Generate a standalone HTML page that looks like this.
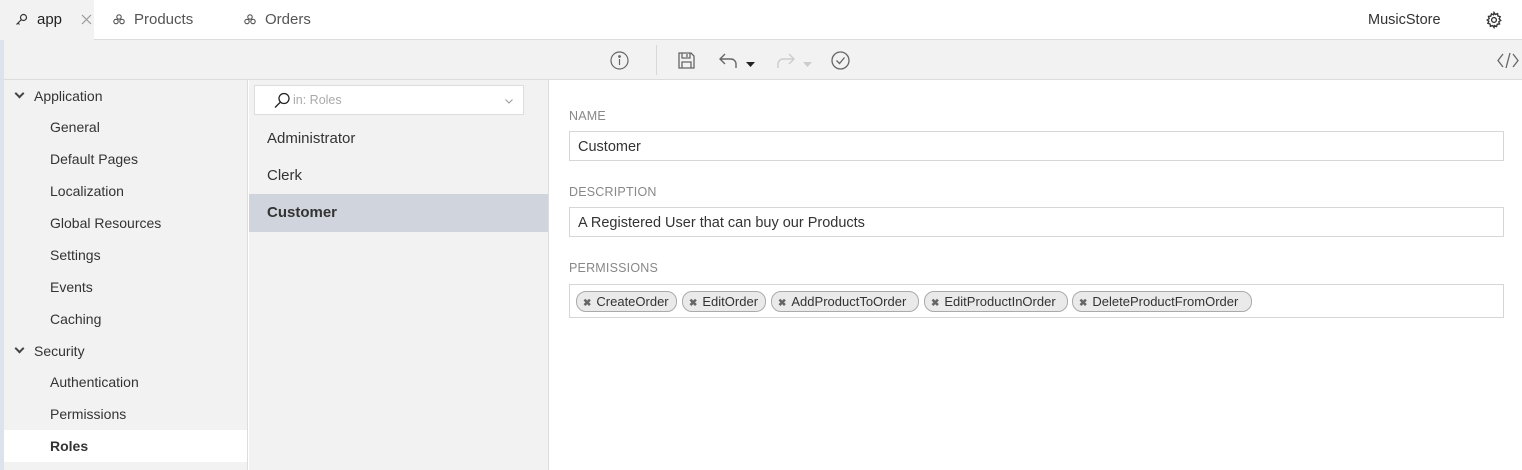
<!DOCTYPE html>
<html><head><meta charset="utf-8"><style>
*{box-sizing:border-box;margin:0;padding:0}
body{width:1522px;height:470px;overflow:hidden;font-family:"Liberation Sans",sans-serif;font-size:14px;color:#333;background:#fff;position:relative}
.abs{position:absolute}
.top{left:0;top:0;width:1522px;height:40px;background:#fff;border-bottom:1px solid #dcdcdc}
.tb{left:0;top:40px;width:1522px;height:40px;background:#f2f2f2;border-bottom:1px solid #dcdcdc}
.strip{left:0;top:40px;width:4px;height:430px;background:#dde3ec}
.side{left:4px;top:80px;width:244px;height:390px;background:#f2f2f2;border-right:1px solid #dcdcdc}
.mid{left:249px;top:80px;width:300px;height:390px;background:#f2f2f2;border-right:1px solid #dcdcdc}
.it{position:absolute;left:46px;font-size:14px;color:#333}
.hd{position:absolute;left:30px;font-size:14px;color:#333}
.chev{position:absolute;left:12px;width:7px;height:7px;border-right:2px solid #444;border-bottom:2px solid #444;transform:rotate(45deg)}
.lbl{position:absolute;left:569px;font-size:12.5px;color:#888;letter-spacing:.2px}
.inp{position:absolute;left:569px;width:935px;height:30px;border:1px solid #d6d6d6;background:#fff;padding:7px 8px;font-size:14.5px;color:#333}
.chip{position:absolute;top:6px;height:21px;border:1px solid #aaa;border-radius:10px;background:#eaeaea;padding:0 0 0 6px;font-size:13px;color:#333;line-height:19px;white-space:nowrap}
.chip b{font-size:10px;color:#666;margin-right:5px}
svg{position:absolute}
</style></head><body>
<div class="abs top"></div>
<div class="abs" style="left:4px;top:0;width:90px;height:40px;background:#f2f2f2"></div>
<div class="abs" style="left:0;top:0;width:4px;height:40px;background:#f2f2f2"></div>
<svg style="left:15px;top:13px" width="13" height="13" viewBox="0 0 13 13" fill="none" stroke="#333" stroke-width="1.2"><circle cx="8.5" cy="4.5" r="3"/><path d="M6.5 6.5L1.5 11.5M3 10l1.5 1.5"/></svg>
<div class="abs" style="left:37px;top:11px;font-size:15px;color:#222">app</div>
<svg style="left:81px;top:14px" width="11" height="11" viewBox="0 0 11 11" stroke="#999" stroke-width="1.2"><path d="M1 1L10 10M10 1L1 10"/></svg>
<svg style="left:113px;top:14px" width="12" height="11" viewBox="0 0 12 11" fill="none" stroke="#555" stroke-width="1.1"><circle cx="6" cy="3" r="2.2"/><circle cx="3" cy="7.5" r="2.2"/><circle cx="9" cy="7.5" r="2.2"/></svg>
<div class="abs" style="left:134px;top:11px;font-size:15px;color:#555">Products</div>
<svg style="left:244px;top:14px" width="12" height="11" viewBox="0 0 12 11" fill="none" stroke="#555" stroke-width="1.1"><circle cx="6" cy="3" r="2.2"/><circle cx="3" cy="7.5" r="2.2"/><circle cx="9" cy="7.5" r="2.2"/></svg>
<div class="abs" style="left:265px;top:11px;font-size:15px;color:#555">Orders</div>
<div class="abs" style="left:1368px;top:12px;font-size:14.5px;color:#333">MusicStore</div>
<svg style="left:1485px;top:11px" width="18" height="18" viewBox="0 0 24 24" fill="none" stroke="#333" stroke-width="1.8"><circle cx="12" cy="12" r="3.2"/><path d="M12 2l1.8 2.6 3-1 .4 3.1 3 .9-1.3 2.8 2.1 2.1-2.6 1.8 1 3-3.1.4-.9 3-2.8-1.3L12 22l-1.8-2.6-3 1-.4-3.1-3-.9 1.3-2.8L3 12l2.6-1.8-1-3 3.1-.4.9-3 2.8 1.3z"/></svg>

<div class="abs tb"></div>
<svg style="left:610px;top:51px" width="19" height="19" viewBox="0 0 19 19" fill="none" stroke="#666" stroke-width="1.2"><circle cx="9.5" cy="9.5" r="8.5"/><path d="M9.5 8v6"/><circle cx="9.5" cy="5.5" r=".8" fill="#666"/></svg>
<div class="abs" style="left:656px;top:45px;width:1px;height:30px;background:#d8d8d8"></div>
<svg style="left:678px;top:52px" width="17" height="17" viewBox="0 0 17 17" fill="none" stroke="#666" stroke-width="1.3"><path d="M1 1h12l3 3v12H1z"/><path d="M4 1v5h8V1M9 2v3M4 16v-6h9v6"/></svg>
<svg style="left:719px;top:53px" width="20" height="16" viewBox="0 0 20 16" fill="none" stroke="#666" stroke-width="1.4"><path d="M6 1L1 6l5 5M1 6h11a5 5 0 0 1 5 5v4"/></svg>
<svg style="left:746px;top:62px" width="9" height="5"><path d="M0 0h9L4.5 5z" fill="#222"/></svg>
<svg style="left:775px;top:53px" width="20" height="16" viewBox="0 0 20 16" fill="none" stroke="#ccc" stroke-width="1.4"><path d="M14 1l5 5-5 5M19 6H8a5 5 0 0 0-5 5v4"/></svg>
<svg style="left:803px;top:62px" width="9" height="5"><path d="M0 0h9L4.5 5z" fill="#ccc"/></svg>
<svg style="left:831px;top:51px" width="19" height="19" viewBox="0 0 19 19" fill="none" stroke="#666" stroke-width="1.3"><circle cx="9.5" cy="9.5" r="8.5"/><path d="M5.5 9.5l3 3 5-6"/></svg>
<svg style="left:1497px;top:52px" width="22" height="17" viewBox="0 0 22 17" fill="none" stroke="#666" stroke-width="1.3"><path d="M6 2L1 8.5 6 15M16 2l5 6.5L16 15M13 1L9 16"/></svg>

<div class="abs strip"></div>
<div class="abs side">
<div class="chev" style="top:10px"></div><div class="hd" style="top:8px">Application</div>
<div class="it" style="top:39px">General</div>
<div class="it" style="top:71px">Default Pages</div>
<div class="it" style="top:103px">Localization</div>
<div class="it" style="top:135px">Global Resources</div>
<div class="it" style="top:167px">Settings</div>
<div class="it" style="top:199px">Events</div>
<div class="it" style="top:231px">Caching</div>
<div class="chev" style="top:265px"></div><div class="hd" style="top:263px">Security</div>
<div class="it" style="top:294px">Authentication</div>
<div class="it" style="top:326px">Permissions</div>
<div class="abs" style="left:0;top:350px;width:243px;height:32px;background:#fff"></div>
<div class="it" style="top:358px;font-weight:bold">Roles</div>
</div>

<div class="abs mid">
<div class="abs" style="left:5px;top:5px;width:270px;height:30px;background:#fff;border:1px solid #ddd"></div>
<svg style="left:25px;top:12px" width="17" height="17" viewBox="0 0 17 17" fill="none" stroke="#222" stroke-width="1.3"><circle cx="10" cy="6.5" r="5"/><path d="M6.5 10L1 15.5"/></svg>
<div class="abs" style="left:44px;top:13px;font-size:12.5px;color:#aaa">in: Roles</div>
<svg style="left:256px;top:19px" width="8" height="5" fill="none" stroke="#999"><path d="M.5.5l3.5 3.5 3.5-3.5"/></svg>
<div class="abs" style="left:18px;top:50px;font-size:15px">Administrator</div>
<div class="abs" style="left:18px;top:87px;font-size:15px">Clerk</div>
<div class="abs" style="left:0;top:114px;width:299px;height:38px;background:#d0d4dc"></div>
<div class="abs" style="left:18px;top:124px;font-size:15px;font-weight:bold">Customer</div>
</div>

<div class="lbl" style="top:109px">NAME</div>
<div class="inp" style="top:131px">Customer</div>
<div class="lbl" style="top:185px">DESCRIPTION</div>
<div class="inp" style="top:207px">A Registered User that can buy our Products</div>
<div class="lbl" style="top:261px">PERMISSIONS</div>
<div class="inp" style="top:284px;height:34px;padding:0">
<span class="chip" style="left:6px;width:101px"><b>✖</b>CreateOrder</span>
<span class="chip" style="left:112px;width:84px"><b>✖</b>EditOrder</span>
<span class="chip" style="left:201px;width:148px"><b>✖</b>AddProductToOrder</span>
<span class="chip" style="left:354px;width:144px"><b>✖</b>EditProductInOrder</span>
<span class="chip" style="left:502px;width:180px"><b>✖</b>DeleteProductFromOrder</span>
</div>
</body></html>
